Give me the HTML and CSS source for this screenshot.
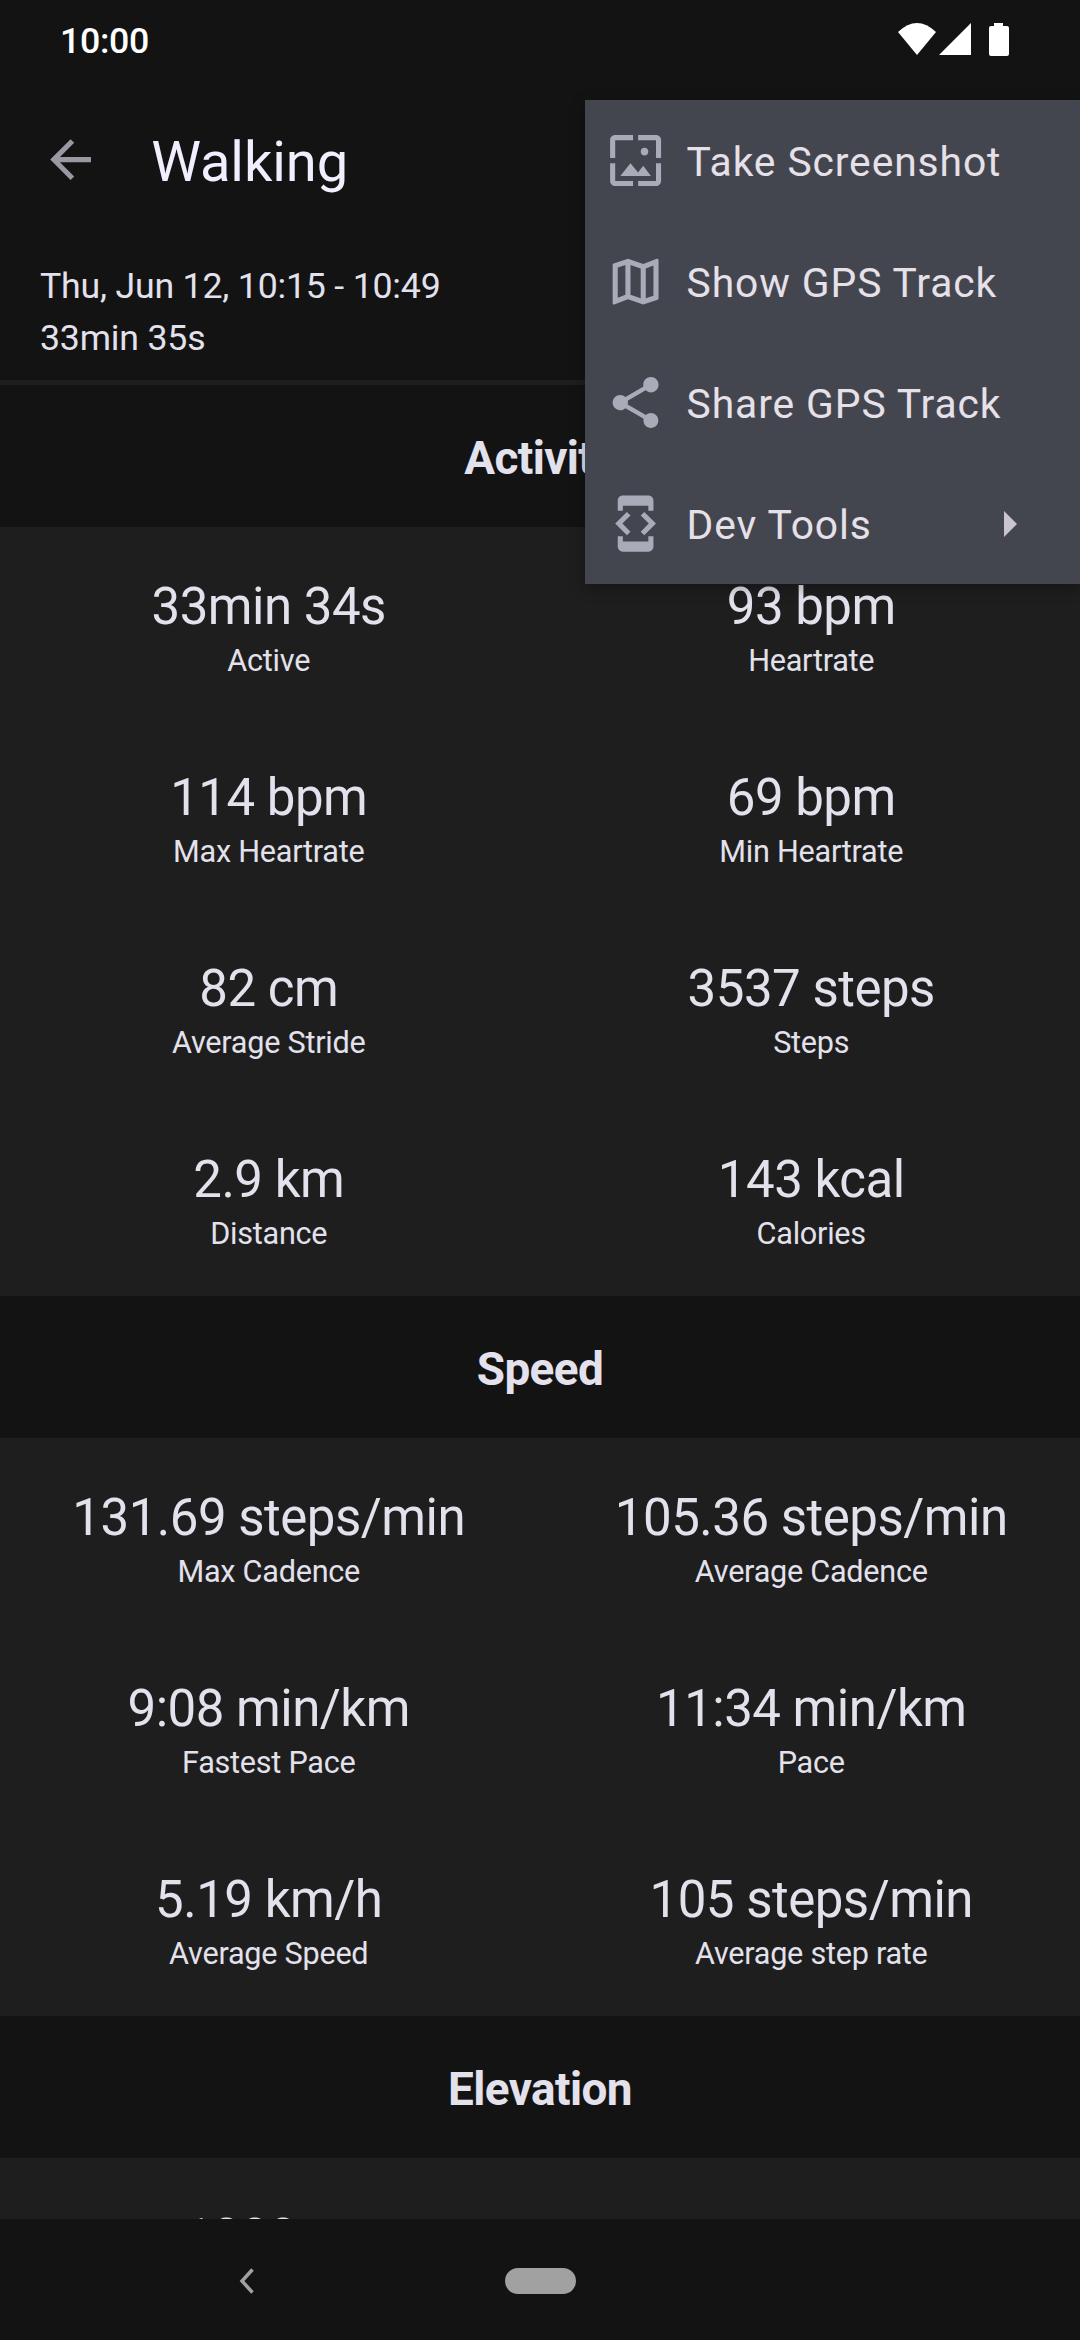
FILE: index.html
```html
<!doctype html>
<html lang="en">
	<head>
		<meta charset="utf-8" />
		<meta
			name="viewport"
			content="width=device-width, initial-scale=1"
		/>
		<title>Walking</title>
		<link rel="stylesheet" href="styles.css">
	</head>
	<body>
		<div class="screen">
			<div class="status-bar">
				<span class="status-time">10:00</span>
				<svg class="status-icons" viewBox="0 0 112 34" fill="#fff">
					<path d="M0 9Q19-9 38 9L19 32Z" />
					<path d="M41 32L73 0V32Z" />
					<path d="M96 0h9v3h4a2 2 0 0 1 2 2v26a2 2 0 0 1-2 2H93a2 2 0 0 1-2-2V5a2 2 0 0 1 2-2h3z" />
				</svg>
			</div>

			<header class="app-bar">
				<svg class="icon" viewBox="0 0 24 24">
					<path d="M20 11H7.83l5.59-5.59L12 4l-8 8 8 8 1.41-1.41L7.83 13H20v-2z" />
				</svg>
				<h1 class="app-title">Walking</h1>
			</header>

			<main class="content">
				<div class="summary">
					<div>Thu, Jun 12, 10:15 - 10:49</div>
					<div>33min 35s</div>
				</div>

				<h2 class="section-title">Activity</h2>
				<div class="stats">
					<div class="stat">
						<div class="stat-value">33min 34s</div>
						<div class="stat-label">Active</div>
					</div>
					<div class="stat">
						<div class="stat-value">93 bpm</div>
						<div class="stat-label">Heartrate</div>
					</div>
					<div class="stat">
						<div class="stat-value">114 bpm</div>
						<div class="stat-label">Max Heartrate</div>
					</div>
					<div class="stat">
						<div class="stat-value">69 bpm</div>
						<div class="stat-label">Min Heartrate</div>
					</div>
					<div class="stat">
						<div class="stat-value">82 cm</div>
						<div class="stat-label">Average Stride</div>
					</div>
					<div class="stat">
						<div class="stat-value">3537 steps</div>
						<div class="stat-label">Steps</div>
					</div>
					<div class="stat">
						<div class="stat-value">2.9 km</div>
						<div class="stat-label">Distance</div>
					</div>
					<div class="stat">
						<div class="stat-value">143 kcal</div>
						<div class="stat-label">Calories</div>
					</div>
				</div>

				<h2 class="section-title">Speed</h2>
				<div class="stats">
					<div class="stat">
						<div class="stat-value">131.69 steps/min</div>
						<div class="stat-label">Max Cadence</div>
					</div>
					<div class="stat">
						<div class="stat-value">105.36 steps/min</div>
						<div class="stat-label">Average Cadence</div>
					</div>
					<div class="stat">
						<div class="stat-value">9:08 min/km</div>
						<div class="stat-label">Fastest Pace</div>
					</div>
					<div class="stat">
						<div class="stat-value">11:34 min/km</div>
						<div class="stat-label">Pace</div>
					</div>
					<div class="stat">
						<div class="stat-value">5.19 km/h</div>
						<div class="stat-label">Average Speed</div>
					</div>
					<div class="stat">
						<div class="stat-value">105 steps/min</div>
						<div class="stat-label">Average step rate</div>
					</div>
				</div>

				<h2 class="section-title">Elevation</h2>
				<div class="stats">
					<div class="stat">
						<div class="stat-value">1388 m</div>
					</div>
				</div>
			</main>

			<nav class="nav-bar">
				<svg class="nav-back" viewBox="0 0 16 26">
					<path d="M13.5 1.5L3 13l10.5 11.5" />
				</svg>
				<span class="nav-home"></span>
			</nav>

			<ul class="menu">
				<li class="menu-item">
					<svg class="icon" viewBox="0 0 24 24">
						<path d="M4 4h7V2H4c-1.100 0-2 .9-2 2v7h2V4zm6 9l-4 5h12l-3-4-2.030 2.710L10 13zm7-4.500c0-.830-.670-1.500-1.500-1.500S14 7.670 14 8.500s.670 1.500 1.500 1.500S17 9.330 17 8.500zM20 2h-7v2h7v7h2V4c0-1.100-.9-2-2-2zm0 18h-7v2h7c1.100 0 2-.9 2-2v-7h-2v7zM4 13H2v7c0 1.100.9 2 2 2h7v-2H4v-7z" />
					</svg>
					<span>Take Screenshot</span>
				</li>
				<li class="menu-item">
					<svg class="icon" viewBox="0 0 24 24">
						<path d="M20.500 3l-.16.030L15 5.100 9 3 3.360 4.900c-.21.070-.36.250-.36.480V20.500c0 .28.220.5.500.5l.16-.03L9 18.900l6 2.100 5.640-1.900c.21-.07.360-.25.360-.48V3.500c0-.28-.22-.5-.5-.5zM10 5.470l4 1.400v11.660l-4-1.400V5.470zm-5 .99l3-1.010v11.700l-3 1.160V6.460zm14 11.080l-3 1.010V6.860l3-1.160v11.840z" />
					</svg>
					<span>Show GPS Track</span>
				</li>
				<li class="menu-item">
					<svg class="icon" viewBox="0 0 24 24">
						<path d="M18 16.080c-.76 0-1.440.3-1.960.77L8.910 12.700c.05-.23.090-.46.090-.7s-.04-.47-.09-.7l7.050-4.110c.54.5 1.250.81 2.040.81 1.660 0 3-1.340 3-3s-1.340-3-3-3-3 1.340-3 3c0 .24.040.47.090.7L8.040 9.810C7.500 9.310 6.790 9 6 9c-1.660 0-3 1.340-3 3s1.340 3 3 3c.79 0 1.500-.31 2.040-.81l7.120 4.160c-.05.21-.08.430-.08.650 0 1.610 1.310 2.920 2.920 2.920s2.920-1.310 2.920-2.920-1.310-2.920-2.920-2.920z" />
					</svg>
					<span>Share GPS Track</span>
				</li>
				<li class="menu-item">
					<svg class="icon" viewBox="0 0 24 24">
						<path d="M7 5h10v2h2V3c0-1.100-.9-1.990-2-1.990L7 1c-1.100 0-2 .9-2 2v4h2V5zm8.410 11.590L20 12l-4.590-4.590L14 8.830 17.170 12 14 15.170l1.410 1.420zM10 15.170L6.830 12 10 8.830 8.590 7.410 4 12l4.590 4.590L10 15.170zM17 19H7v-2H5v4c0 1.100.9 2 2 2h10c1.100 0 2-.9 2-2v-4h-2v2z" />
					</svg>
					<span>Dev Tools</span>
					<svg class="menu-arrow" viewBox="0 0 13 26">
						<path d="M0 0l13 13L0 26z" />
					</svg>
				</li>
			</ul>
		</div>
	</body>
</html>
```

FILE: styles.css
```css
body {
	background-color: #131313;
	color: #e3e1ec;
	font-family: Roboto, sans-serif;
	margin: 0;
}

.screen {
	display: flex;
	flex-direction: column;
	height: 2340px;
	overflow: hidden;
	position: relative;
	width: 1080px;
}

.icon {
	fill: #9a99a3;
	flex: none;
	height: 61.2px;
	width: 61.2px;
}

/* Status bar */
.status-bar {
	box-sizing: border-box;
	color: #fff;
	display: flex;
	flex: none;
	height: 100px;
	justify-content: space-between;
	padding: 20px 70px 0 60px;
}

.status-time {
	font-size: 35.7px;
	font-weight: 500;
	letter-spacing: -0.3px;
	line-height: 42px;
}

.status-icons {
	height: 34px;
	margin-top: 3px;
	width: 112px;
}

/* App bar */
.app-bar {
	align-items: center;
	box-sizing: border-box;
	display: flex;
	flex: none;
	gap: 50px;
	height: 143px;
	padding: 0 40px 24px;
}

.app-title {
	color: #f0efff;
	font-size: 56.1px;
	font-weight: 400;
	letter-spacing: -0.1px;
	line-height: 66px;
	margin: 5px 0 0;
}

/* Workout details */
.content {
	flex: 1;
	min-height: 0;
	overflow: hidden;
}

.summary {
	border-bottom: 5px solid #1e1e1e;
	box-sizing: border-box;
	font-size: 35.7px;
	height: 142px;
	letter-spacing: -0.2px;
	line-height: 52px;
	padding: 17px 40px 0;
}

.section-title {
	font-size: 45.9px;
	font-weight: 700;
	height: 142px;
	letter-spacing: -0.6px;
	line-height: 147px;
	margin: 0;
	text-align: center;
}

.stats {
	background-color: #1e1e1e;
	column-gap: 5px;
	display: grid;
	grid-auto-rows: 191px;
	grid-template-columns: 1fr 1fr;
	padding-bottom: 5px;
}

.stat {
	padding-top: 50px;
	text-align: center;
}

.stat-value {
	font-size: 51px;
	letter-spacing: -0.5px;
	line-height: 60px;
}

.stat-label {
	font-size: 30.6px;
	letter-spacing: -0.25px;
	line-height: 36px;
	margin-top: 6px;
}

/* Navigation bar */
.nav-bar {
	align-items: center;
	box-sizing: border-box;
	display: flex;
	flex: none;
	gap: 250px;
	height: 121px;
	padding: 2px 0 0 239px;
}

.nav-back {
	fill: none;
	height: 26px;
	stroke: #a1a1a1;
	stroke-width: 3.5;
	width: 16px;
}

.nav-home {
	background-color: #a1a1a1;
	border-radius: 13px;
	height: 26px;
	width: 71px;
}

/* Overflow menu */
.menu {
	background-color: #44464f;
	box-shadow: 0 4px 14px rgba(0, 0, 0, 0.3);
	color: #e6e0e9;
	font-size: 40.8px;
	letter-spacing: 0.9px;
	list-style: none;
	margin: 0;
	padding: 0;
	position: absolute;
	right: 0;
	top: 100px;
	width: 495px;
}

.menu-item {
	align-items: center;
	box-sizing: border-box;
	display: flex;
	gap: 20.4px;
	height: 121px;
	padding: 0 63px 0 20px;
}

.menu .icon {
	fill: #a9abb9;
}

.menu-item span {
	padding-top: 3px;
}

.menu-arrow {
	fill: #cac4d0;
	height: 26px;
	margin-left: auto;
	width: 13px;
}
```
